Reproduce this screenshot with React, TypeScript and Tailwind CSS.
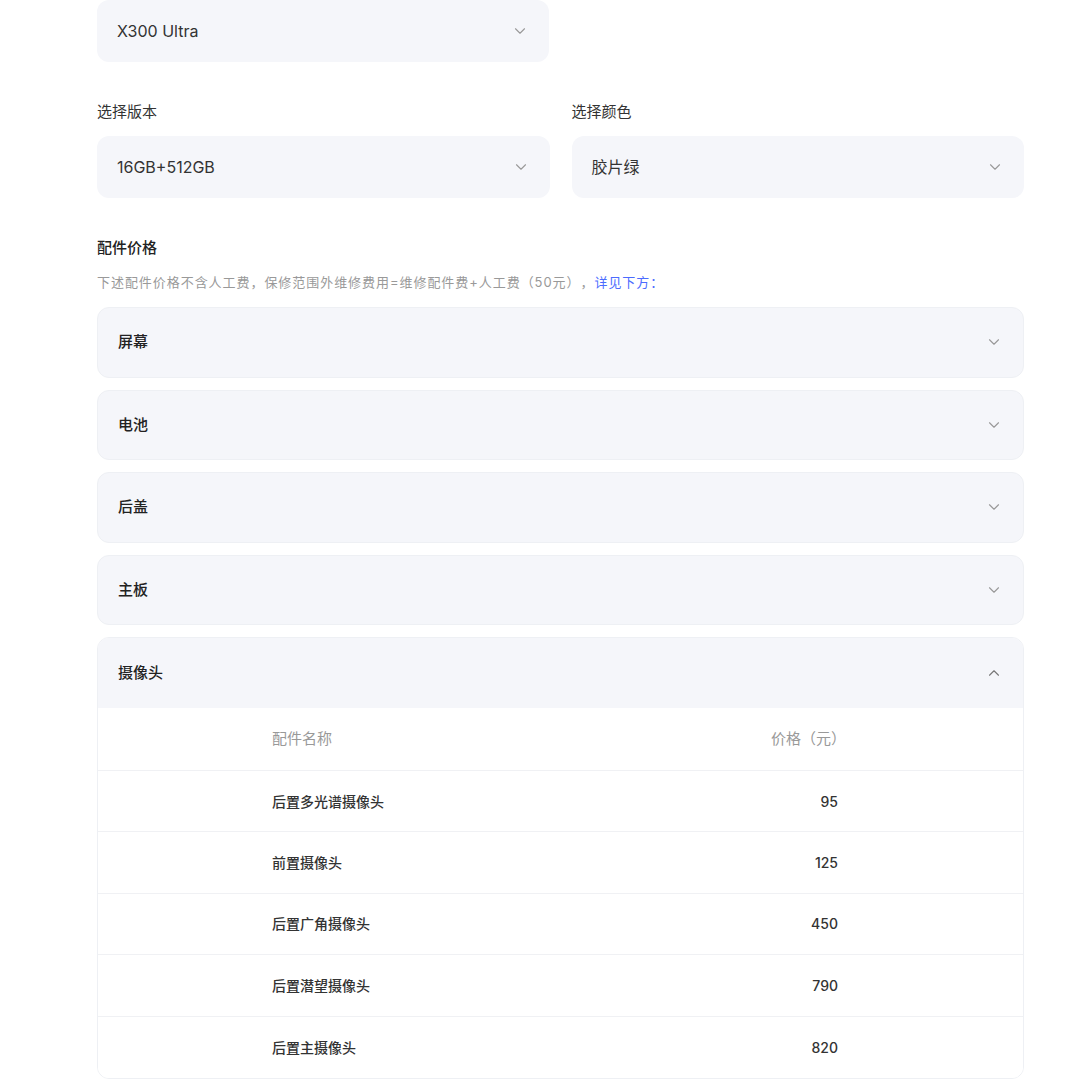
import { ChevronDown, ChevronUp } from 'lucide-react';

const font = { fontFamily: 'Inter, "Noto Sans CJK SC", sans-serif' };

const parts = ['屏幕', '电池', '后盖', '主板'];

const cameraRows = [
    { name: '后置多光谱摄像头', price: 95 },
    { name: '前置摄像头', price: 125 },
    { name: '后置广角摄像头', price: 450 },
    { name: '后置潜望摄像头', price: 790 },
    { name: '后置主摄像头', price: 820 },
];

function Select({ value }: { value: string }) {
    return (
        <div className="flex h-[62px] items-center justify-between rounded-xl bg-[#f5f6fa] pl-5 pr-5">
            <span className="text-[16px] text-[#333]">{value}</span>
            <ChevronDown size={18} strokeWidth={1.5} className="text-[#999]" />
        </div>
    );
}

export default function App() {
    return (
        <div className="min-h-[1084px] bg-white [text-spacing-trim:space-all]" style={font}>
            <div className="ml-[97px] w-[927px]">
                <div className="w-[452px]">
                    <Select value="X300 Ultra" />
                </div>

                <div className="mt-[36px] grid grid-cols-2 gap-[22px]">
                    <div>
                        <div className="mb-[11px] text-[15px] leading-[27px] text-[#333]">选择版本</div>
                        <Select value="16GB+512GB" />
                    </div>
                    <div>
                        <div className="mb-[11px] text-[15px] leading-[27px] text-[#333]">选择颜色</div>
                        <Select value="胶片绿" />
                    </div>
                </div>

                <div className="mt-[38px] text-[15px] font-medium leading-[24px] text-[#222]">配件价格</div>
                <div className="mt-[12px] text-[13px] leading-[20px] tracking-[0.95px] text-[#999]">
                    下述配件价格不含人工费，保修范围外维修费用=维修配件费+人工费（50元），
                    <span className="text-[#4b6bff]">详见下方：</span>
                </div>

                <div className="mt-[15px] flex flex-col gap-[12px]">
                    {parts.map((p) => (
                        <div
                            key={p}
                            className="flex h-[70.5px] items-center justify-between rounded-xl border border-[#eef0f4] bg-[#f5f6fa] px-5"
                        >
                            <span className="text-[15px] font-medium text-[#222]">{p}</span>
                            <ChevronDown size={18} strokeWidth={1.5} className="text-[#999]" />
                        </div>
                    ))}

                    <div className="overflow-hidden rounded-xl border border-[#eef0f4]">
                        <div className="flex h-[70px] items-center justify-between bg-[#f5f6fa] px-5">
                            <span className="text-[15px] font-medium text-[#222]">摄像头</span>
                            <ChevronUp size={18} strokeWidth={1.5} className="text-[#777]" />
                        </div>
                        <div className="bg-white">
                            <div className="grid h-[63px] grid-cols-[174px_1fr_auto] items-center border-b border-[#f0f1f4] pr-[185px] text-[15px] text-[#999]">
                                <span />
                                <span>配件名称</span>
                                <span className="mr-[-8px] text-right">价格（元）</span>
                            </div>
                            {cameraRows.map((r, i) => (
                                <div
                                    key={r.name}
                                    className={`grid h-[61.4px] grid-cols-[174px_1fr_auto] items-center pr-[185px] text-[14px] font-medium text-[#333] ${i < cameraRows.length - 1 ? 'border-b border-[#f0f1f4]' : ''}`}
                                >
                                    <span />
                                    <span>{r.name}</span>
                                    <span className="text-right">{r.price}</span>
                                </div>
                            ))}
                        </div>
                    </div>
                </div>
            </div>
        </div>
    );
}
